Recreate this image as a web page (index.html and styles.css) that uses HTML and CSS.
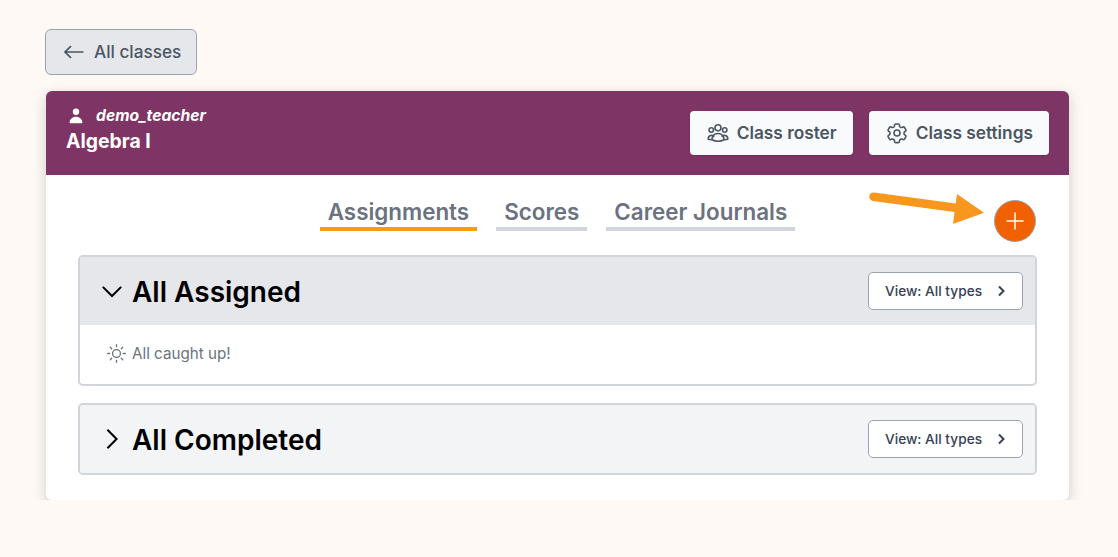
FILE: index.html
```html
<!DOCTYPE html>
<html lang="en">
<head>
    <meta charset="UTF-8">
    <meta name="viewport" content="width=device-width, initial-scale=1.0">
    <title>Algebra I</title>
    <link rel="stylesheet" href="styles.css">
</head>
<body>
    <button class="back-btn">
        <svg class="back-icon" viewBox="0 0 20 14" fill="none" stroke="currentColor" stroke-width="1.7"><path d="M19.5 7H1M7 1.2 1 7l6 5.8"/></svg>
        All classes
    </button>

    <div class="card">
        <div class="card-header">
            <div>
                <div class="teacher">
                    <svg class="teacher-icon" viewBox="0 0 20 20" fill="currentColor"><path d="M10 9a3.2 3.2 0 1 0 0-6.4A3.2 3.2 0 0 0 10 9zM3.6 16.6c0-3.2 2.9-5.8 6.4-5.8s6.400 2.600 6.400 5.800c0 .5-.3.7-.7.7H4.300c-.4 0-.7-.2-.7-.7z"/></svg>
                    demo_teacher
                </div>
                <div class="class-name">Algebra I</div>
            </div>
            <div class="header-actions">
                <button class="header-btn">
                    <svg class="header-icon" viewBox="0 0 24 24" fill="none" stroke="currentColor" stroke-width="1.6" stroke-linecap="round" stroke-linejoin="round"><path d="M18 18.700a9.100 9.100 0 0 0 3.700-.4 3.300 3.300 0 0 0-5.500-3M18 18.700v0a6 6 0 0 0-.8-3.400m0 0A6 6 0 0 0 12 12.500a6 6 0 0 0-5.200 2.800M6 18.700a9.100 9.100 0 0 1-3.700-.4 3.300 3.300 0 0 1 5.500-3M6 18.700a6 6 0 0 1 .8-3.400M6 18.700c1.800 1.100 3.800 1.600 6 1.600s4.200-.5 6-1.600"/><circle cx="12" cy="6.800" r="3"/><circle cx="18.700" cy="9" r="2.200"/><circle cx="5.300" cy="9" r="2.200"/></svg>
                    Class roster
                </button>
                <button class="header-btn">
                    <svg class="header-icon" viewBox="0 0 24 24" fill="none" stroke="currentColor" stroke-width="1.6" stroke-linecap="round" stroke-linejoin="round"><path d="M9.600 3.900c.1-.5.600-.9 1.100-.9h2.600c.5 0 1 .4 1.100.9l.2 1.300c.1.400.4.700.7.900l.5.300c.3.200.7.200 1.100.1l1.200-.5c.5-.2 1.100 0 1.400.5l1.300 2.200c.3.500.2 1.100-.3 1.400l-1 .8c-.3.300-.5.700-.5 1.100v.6c0 .4.200.8.500 1.100l1 .8c.4.300.6.900.3 1.400l-1.300 2.200c-.3.500-.9.700-1.400.5l-1.200-.5c-.4-.1-.8-.1-1.100.1l-.5.300c-.3.200-.6.500-.7.900l-.2 1.300c-.1.500-.6.900-1.100.9h-2.600c-.5 0-1-.4-1.100-.9l-.2-1.300c-.1-.4-.4-.7-.7-.9l-.5-.3c-.3-.2-.7-.2-1.100-.1l-1.200.5c-.5.200-1.100 0-1.400-.5l-1.300-2.200c-.3-.5-.2-1.100.3-1.400l1-.8c.3-.3.500-.7.500-1.100v-.6c0-.4-.2-.8-.5-1.100l-1-.8c-.4-.3-.6-.9-.3-1.400l1.300-2.200c.3-.5.900-.7 1.400-.5l1.200.5c.4.100.8.100 1.100-.1l.5-.3c.3-.2.600-.5.700-.9z"/><circle cx="12" cy="12" r="3"/></svg>
                    Class settings
                </button>
            </div>
        </div>

        <div class="card-body">
            <div class="tabs-row">
                <div class="tab active">Assignments</div>
                <div class="tab">Scores</div>
                <div class="tab">Career Journals</div>

                <svg class="callout-arrow" viewBox="0 0 116 40" fill="none"><path d="M4.500 6.700 88 18" stroke="#f7971e" stroke-width="8.500" stroke-linecap="round"/><path d="M88 4l27 18.700L84 34z" fill="#f7971e"/></svg>
                <button class="add-btn">
                    <svg viewBox="0 0 20 20" fill="none" stroke="#fff" stroke-width="1.500" stroke-linecap="round"><path d="M10 2v16M2 10h16"/></svg>
                </button>
            </div>

            <div class="panel">
                <div class="panel-head open">
                    <svg class="chevron" viewBox="0 0 24 24" fill="none" stroke="currentColor" stroke-width="2.200"><path d="M2 7.500l10 10 10-10"/></svg>
                    <h2>All Assigned</h2>
                    <button class="view-btn">View: All types
                        <svg viewBox="0 0 12 12" fill="none" stroke="currentColor" stroke-width="2"><path d="M4 1.500 8.500 6 4 10.500"/></svg>
                    </button>
                </div>
                <div class="panel-body">
                    <svg class="sun" viewBox="0 0 24 24" fill="none" stroke="currentColor" stroke-width="1.500" stroke-linecap="round"><circle cx="12" cy="12" r="4.500"/><path d="M12 2v2.200M12 19.800V22M2 12h2.200M19.800 12H22M4.900 4.900l1.600 1.600M17.500 17.500l1.600 1.600M4.900 19.100l1.600-1.600M17.500 6.500l1.600-1.600"/></svg>
                    All caught up!
                </div>
            </div>

            <div class="panel">
                <div class="panel-head">
                    <svg class="chevron" viewBox="0 0 24 24" fill="none" stroke="currentColor" stroke-width="2.200"><path d="M7 2l10 10-10 10"/></svg>
                    <h2>All Completed</h2>
                    <button class="view-btn">View: All types
                        <svg viewBox="0 0 12 12" fill="none" stroke="currentColor" stroke-width="2"><path d="M4 1.500 8.500 6 4 10.500"/></svg>
                    </button>
                </div>
            </div>
        </div>
    </div>
</body>
</html>
```

FILE: styles.css
```css
body {
    margin: 0;
    padding: 29px 49px 0 45px;
    background-color: #fff9f5;
    font-family: Inter, "Liberation Sans", sans-serif;
}
button {
    font-family: inherit;
    cursor: pointer;
}
.back-btn {
    display: flex;
    align-items: center;
    gap: 10px;
    width: 152px;
    height: 46px;
    padding: 0 0 1px 18px;
    background: #e5e7eb;
    border: 1px solid #9ca3af;
    border-radius: 6px;
    color: #4b5563;
    font-size: 17.2px;
    font-weight: 500;
}
.back-icon {
    width: 20px;
    height: 14px;
}
.card {
    margin: 16px 0 0 1px;
    background: white;
    border-radius: 6px;
    box-shadow: 0 4px 14px rgba(0,0,0,0.18);
}
.card-header {
    display: flex;
    justify-content: space-between;
    align-items: flex-start;
    height: 84px;
    padding: 0 20px;
    box-sizing: border-box;
    background: #7e3566;
    border-radius: 6px 6px 0 0;
    color: white;
}
.teacher {
    display: flex;
    align-items: center;
    gap: 10px;
    margin-top: 15px;
    font-size: 15.7px;
    font-weight: 700;
    font-style: italic;
    line-height: 20px;
}
.teacher-icon {
    width: 20px;
    height: 20px;
}
.class-name {
    margin-top: 3px;
    font-size: 19.4px;
    font-weight: 700;
    line-height: 24px;
}
.header-actions {
    display: flex;
    gap: 16px;
    margin-top: 20px;
}
.header-btn {
    display: flex;
    align-items: center;
    gap: 7px;
    height: 44px;
    padding: 0 16px 2px;
    background: #f9fafb;
    border: none;
    border-radius: 4px;
    color: #4b5563;
    font-size: 17.3px;
    font-weight: 600;
    box-shadow: 0 1px 2px rgba(0,0,0,0.15);
}
.header-icon {
    width: 24px;
    height: 24px;
    margin-top: 2px;
}
.card-body {
    padding: 22px 32px 25px;
}
.tabs-row {
    position: relative;
    display: flex;
    justify-content: center;
    gap: 19px;
    margin-bottom: 24px;
}
.tab {
    padding: 0 8px;
    border-bottom: 4px solid #d1d5db;
    color: #6b7280;
    font-size: 22.4px;
    font-weight: 600;
    line-height: 30px;
}
.tab.active {
    border-bottom-color: #f59e0b;
}
.callout-arrow {
    position: absolute;
    right: 52px;
    top: -7px;
    width: 116px;
    height: 40px;
}
.add-btn {
    position: absolute;
    right: 1px;
    top: 3px;
    width: 42px;
    height: 42px;
    padding: 10px;
    background: #f26100;
    border: 1px solid #9ca3af;
    border-radius: 50%;
}
.add-btn svg {
    display: block;
    width: 20px;
    height: 20px;
}
.panel {
    margin-bottom: 17px;
    border: 2px solid #d1d5db;
    border-radius: 5px;
    overflow: hidden;
}
.panel:last-child {
    margin-bottom: 0;
}
.panel-head {
    display: flex;
    align-items: center;
    height: 68px;
    padding: 0 12px 0 21px;
    background: #f3f4f6;
}
.panel-head.open {
    background: #e5e7eb;
}
.chevron {
    width: 22px;
    height: 22px;
    color: black;
}
.panel-head h2 {
    flex: 1;
    margin: 2px 0 0 9px;
    color: black;
    font-size: 28px;
    font-weight: 600;
}
.view-btn {
    display: flex;
    align-items: center;
    justify-content: space-between;
    width: 155px;
    height: 38px;
    padding: 0 15px 0 16px;
    background: white;
    border: 1px solid #9ca3af;
    border-radius: 5px;
    color: #374151;
    font-size: 13.7px;
    font-weight: 500;
}
.view-btn svg {
    width: 12px;
    height: 12px;
}
.panel-body {
    display: flex;
    align-items: center;
    gap: 5px;
    height: 56px;
    padding: 0 0 3px 26px;
    color: #6b7280;
    font-size: 15.2px;
}
.sun {
    width: 21px;
    height: 21px;
}
```
